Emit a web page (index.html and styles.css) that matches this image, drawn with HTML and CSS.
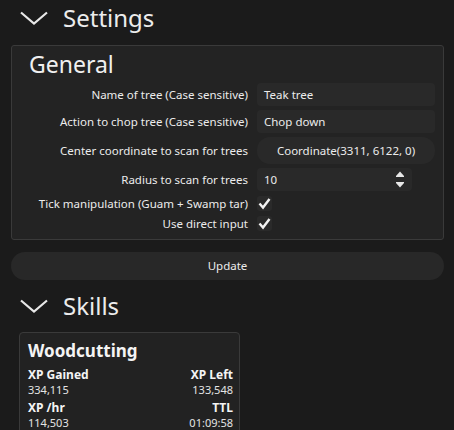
FILE: index.html
```html
<!DOCTYPE html>
<html>
<head>
<meta charset="utf-8">
<link rel="stylesheet" href="styles.css">
</head>
<body>
<div class="header">
  <svg class="chev" width="28" height="14" viewBox="0 0 28 14"><path d="M1 1.5 L14 12.5 L27 1.5" fill="none" stroke="#e8e8e8" stroke-width="2.2"/></svg>
  <span class="htitle">Settings</span>
</div>
<div class="panel">
  <div class="ptitle">General</div>
  <div class="form">
    <div class="label">Name of tree (Case sensitive)</div>
    <div class="input">Teak tree</div>
    <div class="label">Action to chop tree (Case sensitive)</div>
    <div class="input">Chop down</div>
    <div class="label">Center coordinate to scan for trees</div>
    <div class="pill">Coordinate(3311, 6122, 0)</div>
    <div class="label">Radius to scan for trees</div>
    <div class="input spin">
      <span>10</span>
      <svg class="arrows" width="10" height="17" viewBox="0 0 10 17"><path d="M5 0.5 L9 5 L1 5 Z" fill="#e8e8e8"/><rect x="1" y="5" width="8" height="1" fill="#e8e8e8"/><rect x="1" y="11" width="8" height="1" fill="#e8e8e8"/><path d="M1 12 L9 12 L5 16.5 Z" fill="#e8e8e8"/></svg>
    </div>
    <div class="label">Tick manipulation (Guam + Swamp tar)</div>
    <div class="check"><svg width="15" height="15" viewBox="0 0 15 15"><path d="M2.5 7.5 L6 11.5 L12.5 3" fill="none" stroke="#f2f2f2" stroke-width="2.4"/></svg></div>
    <div class="label">Use direct input</div>
    <div class="check"><svg width="15" height="15" viewBox="0 0 15 15"><path d="M2.5 7.5 L6 11.5 L12.5 3" fill="none" stroke="#f2f2f2" stroke-width="2.4"/></svg></div>
  </div>
</div>
<div class="update">Update</div>
<div class="header skills-h">
  <svg class="chev" width="28" height="14" viewBox="0 0 28 14"><path d="M1 1.5 L14 12.5 L27 1.5" fill="none" stroke="#e8e8e8" stroke-width="2.2"/></svg>
  <span class="htitle">Skills</span>
</div>
<div class="card">
  <div class="ctitle">Woodcutting</div>
  <div class="stats">
    <div class="stat"><div class="sl">XP Gained</div><div class="sv">334,115</div></div>
    <div class="stat right"><div class="sl">XP Left</div><div class="sv">133,548</div></div>
    <div class="stat"><div class="sl">XP /hr</div><div class="sv">114,503</div></div>
    <div class="stat right"><div class="sl">TTL</div><div class="sv">01:09:58</div></div>
  </div>
</div>
</body>
</html>
```
FILE: styles.css
```css
html, body {
  margin: 0;
  padding: 0;
  background: #1b1b1b;
  color: #ececec;
  font-family: "Noto Sans", "DejaVu Sans", sans-serif;
  overflow: hidden;
}
.header {
  display: flex;
  align-items: center;
  height: 36px;
  padding-left: 20px;
  gap: 15px;
  margin-bottom: 9px;
}
.chev { display: block; }
.htitle {
  font-size: 24px;
  line-height: 36px;
  color: #ececec;
}
.panel {
  margin: 0 10px 0 11px;
  background: #232323;
  border: 1px solid #3a3a3a;
  border-radius: 3px;
  padding: 3px 8px 8px 0;
}
.ptitle {
  font-size: 23px;
  line-height: 30px;
  padding-left: 17px;
  margin-bottom: 4px;
  color: #f0f0f0;
}
.form {
  display: grid;
  grid-template-columns: 1fr 178px;
  column-gap: 9px;
  row-gap: 4px;
  align-items: center;
}
.label {
  text-align: right;
  font-size: 11.5px;
  line-height: 15px;
  color: #ececec;
  white-space: nowrap;
}
.input {
  height: 23px;
  background: #292929;
  border-radius: 4px;
  font-size: 11.5px;
  line-height: 23px;
  padding-left: 7px;
}
.pill {
  height: 27px;
  background: #292929;
  border-radius: 13px;
  font-size: 11.5px;
  line-height: 27px;
  text-align: center;
}
.spin {
  width: 141px;
  display: flex;
  align-items: center;
  justify-content: space-between;
  padding-right: 7px;
}
.arrows { display: block; }
.check {
  width: 15px;
  height: 15px;
  background: #2a2a2a;
  border-radius: 3px;
  margin-top: 1px;
}
.check svg { display: block; }
.update {
  margin: 12px 10px 0 11px;
  height: 28px;
  background: #282828;
  border-radius: 14px;
  font-size: 11.5px;
  line-height: 28px;
  text-align: center;
  color: #ececec;
}
.skills-h {
  margin-top: 8px;
  margin-bottom: 8px;
}
.card {
  margin-left: 19px;
  width: 205px;
  background: #222222;
  border: 1px solid #3a3a3a;
  border-radius: 4px;
  padding: 7px 6px 10px 8px;
}
.ctitle {
  font-size: 17px;
  font-weight: bold;
  line-height: 22px;
  color: #f4f4f4;
  margin-bottom: 6px;
}
.stats {
  display: grid;
  grid-template-columns: 1fr 1fr;
  row-gap: 4px;
}
.right { text-align: right; }
.sl {
  font-size: 12px;
  font-weight: bold;
  line-height: 14px;
  color: #f4f4f4;
}
.sv {
  font-size: 11px;
  line-height: 15px;
  color: #e4e4e4;
}
```
